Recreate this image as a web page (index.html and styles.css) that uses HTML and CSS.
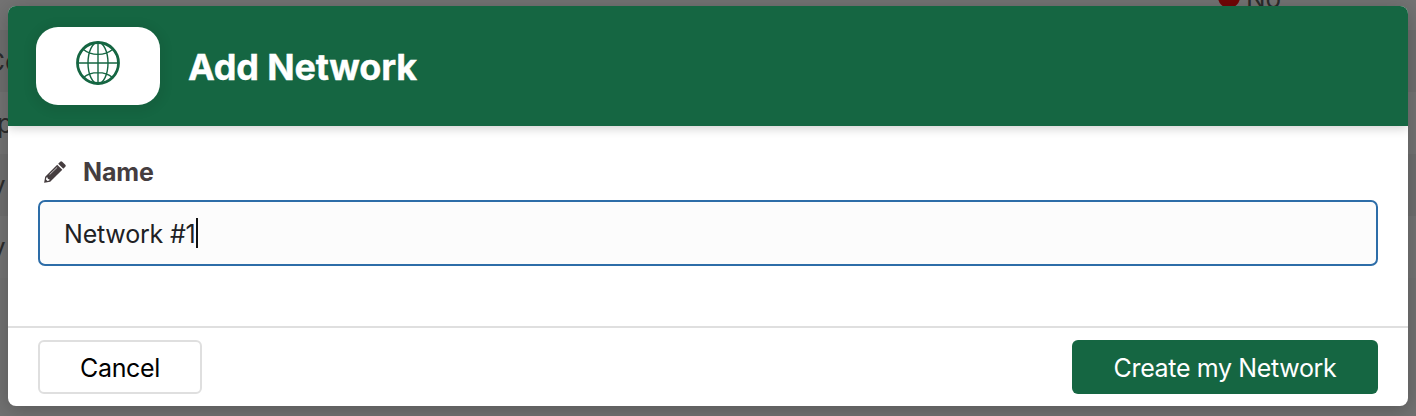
FILE: index.html
```html
<!DOCTYPE html>
<html lang="en">
<head>
<meta charset="utf-8">
<title>Add Network</title>
<link rel="stylesheet" href="styles.css">
</head>
<body>
<div class="backdrop" aria-hidden="true">
  <span class="peek peek-co">Co</span>
  <span class="peek peek-p">p</span>
  <span class="peek peek-y1">y</span>
  <span class="peek peek-y2">y</span>
  <span class="status-dot"></span>
  <span class="peek peek-no">No</span>
</div>
<main class="modal">
  <header class="modal-header">
    <div class="badge">
      <svg class="globe" viewBox="0 0 44 44" fill="none" stroke="currentColor" stroke-width="1.4">
        <circle cx="22" cy="22" r="20.500" stroke-width="2.800"/>
        <ellipse cx="22" cy="22" rx="10" ry="20.700"/>
        <path d="M22 1v42M1 22h42M7.500 8.500C15 15 29 15 36.500 8.500M7.500 36.500C15 30 29 30 36.500 36.500"/>
      </svg>
    </div>
    <h1 class="title">Add Network</h1>
  </header>
  <section class="modal-body">
    <label class="field-label">
      <svg class="pencil" viewBox="0 0 22 22">
        <path fill="currentColor" d="M14.200 2.700L16.200.7Q17.200-.2 18.200.7L21.300 3.800Q22.200 4.800 21.300 5.800L19.300 7.800ZM13.200 3.700L18.300 8.800L6.200 20.700L.4 21.700Q0 21.700 .2 21.200L1.200 15.700Z"/>
        <path d="M5.600 13.600L13.200 6.300" stroke="#fff" stroke-width=".7" fill="none"/>
        <path d="M2.300 16.600L3.600 16.400L3.900 18L5.500 18.300L5.300 19.500L3.400 19.900L2 18.500Z" fill="#fff"/>
      </svg>
      <span>Name</span>
    </label>
    <div class="field"><span class="value">Network #1</span><span class="caret"></span></div>
  </section>
  <footer class="modal-footer">
    <button class="btn btn-cancel">Cancel</button>
    <button class="btn btn-create">Create my Network</button>
  </footer>
</main>
</body>
</html>
```
FILE: styles.css
```css
* { box-sizing: border-box; }
body {
  margin: 0;
  width: 1416px;
  height: 416px;
  overflow: hidden;
  padding: 6px 8px 10px;
  background: #737373;
  font-family: Inter, "Liberation Sans", sans-serif;
}
.backdrop {
  position: absolute;
  inset: 0;
  overflow: hidden;
  background: linear-gradient(#737373 0 30px, #6e6e6e 30px 92px, #737373 92px 154px, #6e6e6e 154px 216px, #737373 216px 278px, #717171 278px);
}
.peek { position: absolute; font-size: 26px; line-height: 32px; color: #2b2b2b; }
.peek-co { left: -14px; top: 46px; }
.peek-p { left: -3px; top: 108px; }
.peek-y1 { left: -9px; top: 170px; }
.peek-y2 { left: -9px; top: 232px; }
.peek-no { left: 1246px; top: -17px; }
.status-dot {
  position: absolute;
  left: 1218px;
  top: -14px;
  width: 22px;
  height: 22px;
  border-radius: 50%;
  background: #710606;
}
.modal {
  position: relative;
  display: flex;
  flex-direction: column;
  height: 400px;
  border-radius: 8px;
  overflow: hidden;
  background: #fff;
  box-shadow: 0 4px 20px rgba(0, 0, 0, .22);
}
.modal-header {
  position: relative;
  display: flex;
  align-items: center;
  gap: 28px;
  height: 120px;
  padding: 0 28px;
  background: #156642;
  color: #fff;
  box-shadow: 0 2px 10px rgba(0, 0, 0, .2);
}
.badge {
  display: flex;
  justify-content: center;
  width: 124px;
  height: 78px;
  padding-top: 13.5px;
  border-radius: 22px;
  background: #fff;
  color: #156642;
  box-shadow: 0 2px 8px 6px rgba(0, 0, 0, .055);
}
.globe { width: 44px; height: 44px; }
.title {
  margin: 0;
  padding-top: 2px;
  font-size: 36px;
  font-weight: 700;
  line-height: 44px;
  letter-spacing: -.2px;
  -webkit-text-stroke: .4px #fff;
}
.modal-body { flex: 1; padding: 30px 30px 0; }
.field-label {
  display: flex;
  align-items: center;
  gap: 17px;
  height: 32px;
  padding-left: 6px;
  font-size: 25px;
  font-weight: 700;
  letter-spacing: -.1px;
  color: #453d3f;
}
.pencil { width: 22px; height: 22px; }
.field {
  display: flex;
  align-items: center;
  height: 66px;
  margin-top: 12px;
  padding-left: 24px;
  border: 2px solid #2d6da8;
  border-radius: 7px;
  background: #fcfcfc;
  color: #202124;
  font-size: 25px;
  letter-spacing: -.2px;
}
.value { padding-top: 2px; }
.caret { width: 2px; height: 30px; background: #111; }
.modal-footer {
  display: flex;
  align-items: center;
  justify-content: space-between;
  height: 80px;
  padding: 0 30px;
  border-top: 2px solid #dfdfdf;
}
.btn {
  display: flex;
  align-items: center;
  justify-content: center;
  height: 54px;
  padding: 2px 0 0;
  border: 0;
  border-radius: 6px;
  font: 400 25px Inter, "Liberation Sans", sans-serif;
  letter-spacing: -.35px;
}
.btn-cancel { width: 164px; border: 2px solid #dfdfdf; background: #fff; color: #000; }
.btn-create { width: 306px; background: #156642; color: #fff; }
```
